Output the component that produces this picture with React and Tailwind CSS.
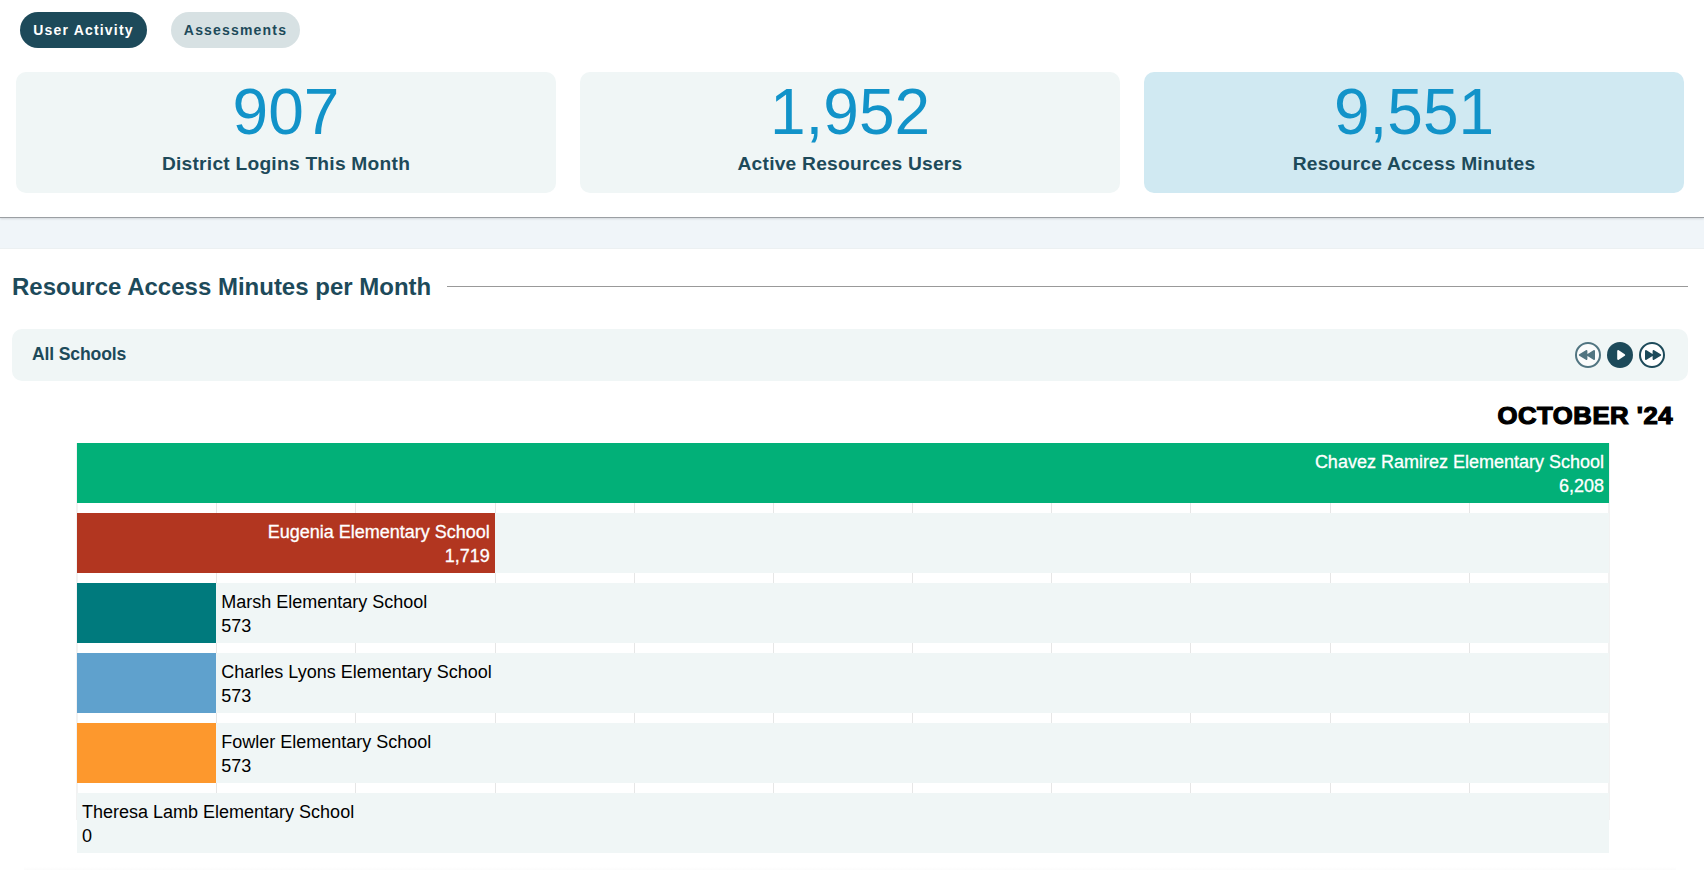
import { useState } from "react";

const stats = [
  { label: "District Logins This Month", value: 907 },
  { label: "Active Resources Users", value: 1952 },
  { label: "Resource Access Minutes", value: 9551 },
];

// ticks = how many grid columns the bar covers
const schools = [
  { name: "Chavez Ramirez Elementary School", minutes: 6208, ticks: 11, color: "bg-[#02b078]" },
  { name: "Eugenia Elementary School", minutes: 1719, ticks: 3, color: "bg-[#b23620]" },
  { name: "Marsh Elementary School", minutes: 573, ticks: 1, color: "bg-[#007a7d]" },
  { name: "Charles Lyons Elementary School", minutes: 573, ticks: 1, color: "bg-[#5fa1cd]" },
  { name: "Fowler Elementary School", minutes: 573, ticks: 1, color: "bg-[#fd982d]" },
  { name: "Theresa Lamb Elementary School", minutes: 0, ticks: 0, color: "bg-transparent" },
];

const TICKS = 11;

function BarLabel({ school, inside }) {
  return (
    <div
      className={`px-[5px] pt-[7px] text-[18px] leading-6 whitespace-nowrap ${
        inside ? "text-right text-white [-webkit-text-stroke:0.3px_white]" : "text-black"
      }`}
    >
      <p>{school.name}</p>
      <p>{school.minutes.toLocaleString("en-US")}</p>
    </div>
  );
}

function BarRow({ school }) {
  const inside = school.ticks > 1;
  return (
    <div className="flex h-[60px] bg-[#f0f6f6]">
      <div
        className={`shrink-0 ${school.color}`}
        style={{ width: `${(school.ticks / TICKS) * 100}%` }}
      >
        {inside && <BarLabel school={school} inside />}
      </div>
      {!inside && <BarLabel school={school} />}
    </div>
  );
}

function SkipIcon({ back }) {
  return (
    <svg width="26" height="26" viewBox="0 0 26 26" className={back ? "-scale-x-100" : ""}>
      <circle cx="13" cy="13" r="12" fill="white" stroke="currentColor" strokeWidth="2" />
      <path
        d="M7 9 13.4 13 7 17ZM14.6 9 21.2 13 14.6 17Z"
        fill="currentColor"
        stroke="currentColor"
        strokeWidth="2"
        strokeLinejoin="round"
      />
    </svg>
  );
}

function PlayIcon() {
  return (
    <svg width="26" height="26" viewBox="0 0 26 26">
      <circle cx="13" cy="13" r="13" fill="currentColor" />
      <path
        d="M11.2 9 17.2 13 11.2 17Z"
        fill="white"
        stroke="white"
        strokeWidth="2"
        strokeLinejoin="round"
      />
    </svg>
  );
}

export default function App() {
  const [activeTab, setActiveTab] = useState("User Activity");
  const [activeStat, setActiveStat] = useState("Resource Access Minutes");

  return (
    <div className="h-[870px] overflow-hidden bg-white font-['Liberation_Sans',Arial,sans-serif] text-[#1d4a5a]">
      <div className="relative h-[218px] border-b border-[#9b9fa3] shadow-[0_1px_2px_rgba(0,0,0,0.12)]">
        {/* Tabs */}
        <div className="flex gap-6 pt-3 pl-5">
          {["User Activity", "Assessments"].map((tab) => (
            <button
              key={tab}
              onClick={() => setActiveTab(tab)}
              className={`h-9 rounded-full text-[14px] font-bold tracking-[1.18px] ${
                tab === "User Activity" ? "w-[127px]" : "w-[129px]"
              } ${activeTab === tab ? "bg-[#1d4a5a] text-white" : "bg-[#d7e1e3]"}`}
            >
              {tab}
            </button>
          ))}
        </div>

        {/* Stat cards */}
        <div className="grid grid-cols-3 gap-6 pt-6 pr-5 pl-4">
          {stats.map((stat) => (
            <button
              key={stat.label}
              onClick={() => setActiveStat(stat.label)}
              className={`flex h-[121px] flex-col items-center rounded-[10px] ${
                activeStat === stat.label ? "bg-[#d0e9f2]" : "bg-[#f0f6f6]"
              }`}
            >
              <span className="pt-2 text-[64px] leading-[64px] text-[#1293c9]">
                {stat.value.toLocaleString("en-US")}
              </span>
              <span className="pt-[7.5px] text-[19.2px] leading-6 font-bold tracking-[0.24px]">
                {stat.label}
              </span>
            </button>
          ))}
        </div>
      </div>

      <div className="h-[31px] border-b border-[#ecf0f2] bg-[#f0f5f9]" />

      <div className="pr-4 pl-3">
        {/* Section heading */}
        <div className="flex items-center gap-4 pt-5">
          <h2 className="pt-0.5 text-[24px] leading-8 font-bold">
            Resource Access Minutes per Month
          </h2>
          <div className="h-px flex-1 bg-[#999]" />
        </div>

        {/* Player bar */}
        <div className="mt-[26px] flex h-[52px] items-center justify-between rounded-[10px] bg-[#f0f6f6] pr-[23px] pl-5">
          <span className="pb-px text-[17.6px] font-bold tracking-[-0.15px]">All Schools</span>
          <div className="flex gap-1.5">
            <button className="opacity-75">
              <SkipIcon back />
            </button>
            <button>
              <PlayIcon />
            </button>
            <button>
              <SkipIcon />
            </button>
          </div>
        </div>

        {/* Current month */}
        <div className="flex h-[62px] justify-end pt-[19px] pr-[15px]">
          <p className="origin-right scale-x-[1.07] text-[24px] leading-8 font-bold tracking-[0.5px] text-black [-webkit-text-stroke:1.2px_black]">
            OCTOBER '24
          </p>
        </div>

        {/* Bar race */}
        <div className="relative mr-[79px] ml-[65px]">
          <div className="absolute top-0 -left-px flex h-[377px] w-[1534px] justify-between">
            {Array.from({ length: TICKS + 1 }, (_, i) => (
              <div
                key={i}
                className={i % TICKS === 0 ? "w-0.5 bg-[#f2f2f2]" : "w-px bg-[#e6e6e6]"}
              />
            ))}
          </div>
          <div className="relative flex flex-col gap-2.5">
            {schools.map((school) => (
              <BarRow key={school.name} school={school} />
            ))}
          </div>
        </div>

        {/* Top shadow of the next panel */}
        <div className="mx-3 mt-3.5 h-[3px] bg-linear-to-b from-white to-[#fbfbfb]" />
      </div>
    </div>
  );
}
